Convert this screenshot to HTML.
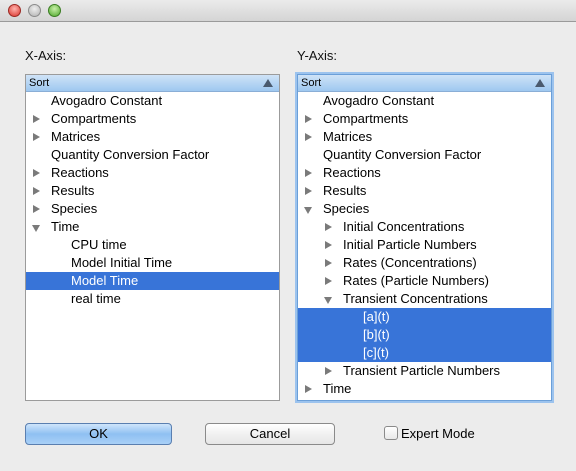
<!DOCTYPE html>
<html><head><style>
body{margin:0;width:576px;height:471px;background:#ececec;font-family:"Liberation Sans",sans-serif;font-size:13px;position:relative;overflow:hidden}
.tb{position:absolute;left:0;top:0;width:576px;height:21px;background:linear-gradient(#ebebeb,#d4d4d4);border-bottom:1px solid #9a9a9a}
.dot{position:absolute;top:4px;width:12px;height:12px;border-radius:50%}
.lbl{position:absolute;top:48px;font-size:13px;color:#111}
.box{position:absolute;background:#fff;border:1px solid #9b9b9b;overflow:hidden}
.hdr{height:16px;background:linear-gradient(#cfe3f7,#9ec8f0);border-bottom:1px solid #8aaed6;font-size:11px;line-height:16px;padding-left:3px;position:relative}
.hdr:after{content:"";position:absolute;right:6px;top:4px;border-left:5px solid transparent;border-right:5px solid transparent;border-bottom:8px solid #4a5a6e}
.row{height:18px;line-height:18px;position:relative;white-space:nowrap;color:#000}
.sel{background:#3874d8;color:#fff}
.tri{position:absolute;top:5px;border-top:4px solid transparent;border-bottom:4px solid transparent;border-left:7px solid #7a7a7a}
.tri.d{top:7px;border-left:4px solid transparent;border-right:4px solid transparent;border-top:7px solid #7a7a7a;border-bottom:0}
.btn{position:absolute;top:423px;height:20px;border:1px solid #8a8a8a;border-radius:4px;text-align:center;line-height:20px;font-size:13px}
</style></head><body>
<div class="tb">
<div class="dot" style="left:8px;background:radial-gradient(circle at 50% 35%,#ffb3ad,#d9322a);border:1px solid #9b2a24;width:11px;height:11px"></div>
<div class="dot" style="left:28px;background:radial-gradient(circle at 50% 35%,#eee,#b0b0b0);border:1px solid #8b8b8b;width:11px;height:11px"></div>
<div class="dot" style="left:48px;background:radial-gradient(circle at 50% 35%,#c8f0a8,#4da62a);border:1px solid #3a7d22;width:11px;height:11px"></div>
</div>
<div class="lbl" style="left:25px">X-Axis:</div>
<div class="lbl" style="left:297px">Y-Axis:</div>

<div class="box" style="left:25px;top:74px;width:253px;height:325px">
<div class="hdr">Sort</div>
<div class="row"><span style="position:absolute;left:25px">Avogadro Constant</span></div>
<div class="row"><i class="tri" style="left:7px"></i><span style="position:absolute;left:25px">Compartments</span></div>
<div class="row"><i class="tri" style="left:7px"></i><span style="position:absolute;left:25px">Matrices</span></div>
<div class="row"><span style="position:absolute;left:25px">Quantity Conversion Factor</span></div>
<div class="row"><i class="tri" style="left:7px"></i><span style="position:absolute;left:25px">Reactions</span></div>
<div class="row"><i class="tri" style="left:7px"></i><span style="position:absolute;left:25px">Results</span></div>
<div class="row"><i class="tri" style="left:7px"></i><span style="position:absolute;left:25px">Species</span></div>
<div class="row"><i class="tri d" style="left:6px"></i><span style="position:absolute;left:25px">Time</span></div>
<div class="row"><span style="position:absolute;left:45px">CPU time</span></div>
<div class="row"><span style="position:absolute;left:45px">Model Initial Time</span></div>
<div class="row sel"><span style="position:absolute;left:45px">Model Time</span></div>
<div class="row"><span style="position:absolute;left:45px">real time</span></div>
</div>

<div class="box" style="left:297px;top:74px;width:253px;height:325px;border-color:#6b9fd8;box-shadow:0 0 0 2px #9cc3ee">
<div class="hdr">Sort</div>
<div class="row"><span style="position:absolute;left:25px">Avogadro Constant</span></div>
<div class="row"><i class="tri" style="left:7px"></i><span style="position:absolute;left:25px">Compartments</span></div>
<div class="row"><i class="tri" style="left:7px"></i><span style="position:absolute;left:25px">Matrices</span></div>
<div class="row"><span style="position:absolute;left:25px">Quantity Conversion Factor</span></div>
<div class="row"><i class="tri" style="left:7px"></i><span style="position:absolute;left:25px">Reactions</span></div>
<div class="row"><i class="tri" style="left:7px"></i><span style="position:absolute;left:25px">Results</span></div>
<div class="row"><i class="tri d" style="left:6px"></i><span style="position:absolute;left:25px">Species</span></div>
<div class="row"><i class="tri" style="left:27px"></i><span style="position:absolute;left:45px">Initial Concentrations</span></div>
<div class="row"><i class="tri" style="left:27px"></i><span style="position:absolute;left:45px">Initial Particle Numbers</span></div>
<div class="row"><i class="tri" style="left:27px"></i><span style="position:absolute;left:45px">Rates (Concentrations)</span></div>
<div class="row"><i class="tri" style="left:27px"></i><span style="position:absolute;left:45px">Rates (Particle Numbers)</span></div>
<div class="row"><i class="tri d" style="left:26px"></i><span style="position:absolute;left:45px">Transient Concentrations</span></div>
<div class="row sel"><span style="position:absolute;left:65px">[a](t)</span></div>
<div class="row sel"><span style="position:absolute;left:65px">[b](t)</span></div>
<div class="row sel"><span style="position:absolute;left:65px">[c](t)</span></div>
<div class="row"><i class="tri" style="left:27px"></i><span style="position:absolute;left:45px">Transient Particle Numbers</span></div>
<div class="row"><i class="tri" style="left:7px"></i><span style="position:absolute;left:25px">Time</span></div>
</div>

<div class="btn" style="left:25px;width:145px;background:linear-gradient(#cfe5fb,#8fc0f2 50%,#a9d0f7);border-color:#5a7fb0">OK</div>
<div class="btn" style="left:205px;width:128px;background:linear-gradient(#fff,#f1f1f1 50%,#e6e6e6)">Cancel</div>
<div style="position:absolute;left:384px;top:426px;width:12px;height:12px;border:1px solid #8a8a8a;border-radius:3px;background:linear-gradient(#fff,#e8e8e8)"></div>
<div style="position:absolute;left:401px;top:426px;font-size:13px">Expert Mode</div>
</body></html>
